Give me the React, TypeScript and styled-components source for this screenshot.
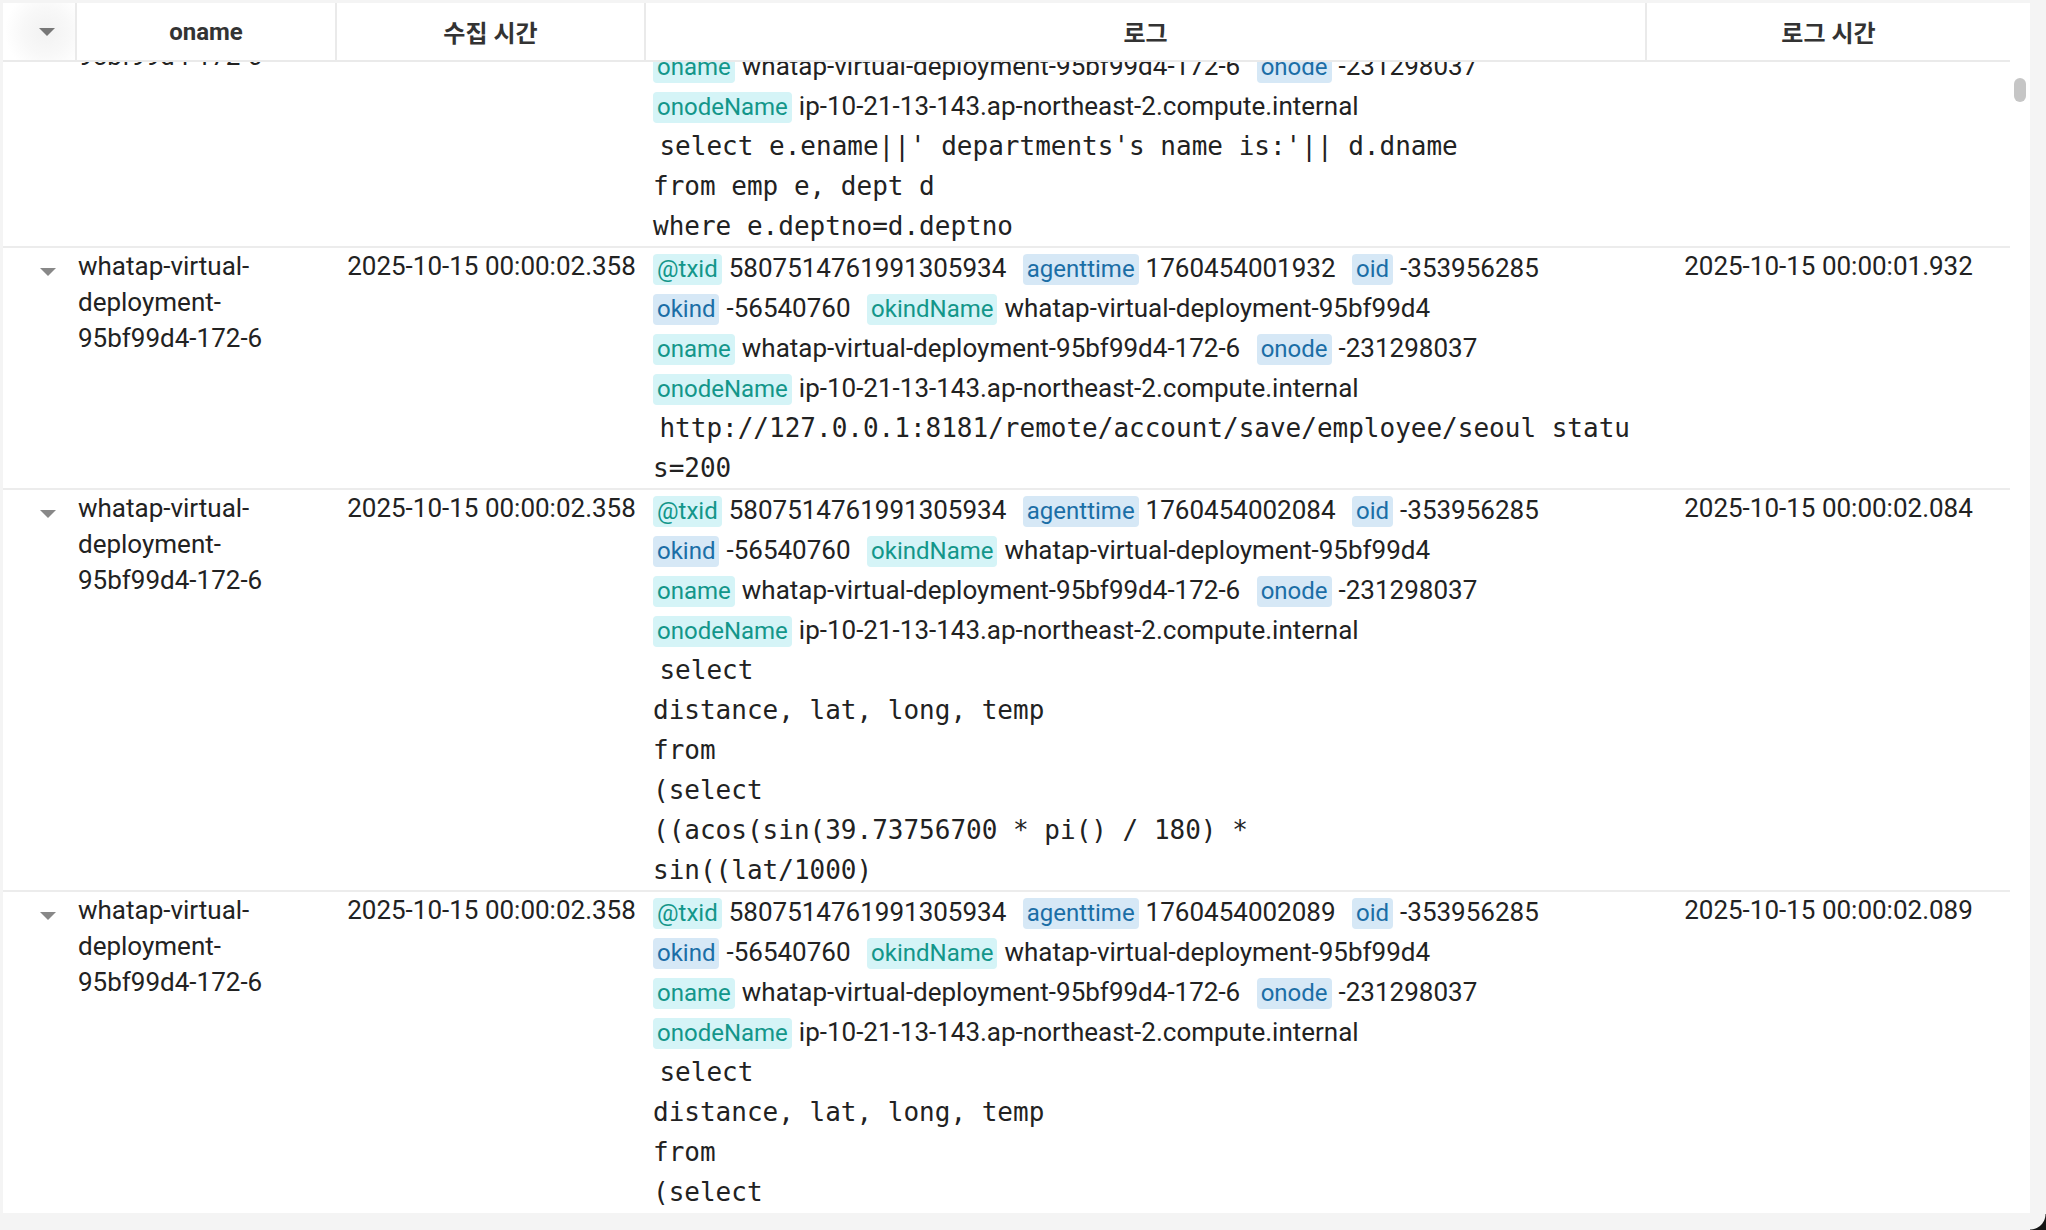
import { useLayoutEffect, useRef } from "react";
import styled, { createGlobalStyle } from "styled-components";

const GlobalStyle = createGlobalStyle`
  html, body {
    margin: 0;
    padding: 0;
    background: #f4f4f4;
  }
  body {
    font-family: Roboto, "Noto Sans CJK KR", sans-serif;
    color: #222;
  }
`;

const COLS = "74px 260px 309px 1001px 363px";

const Frame = styled.div`
  position: relative;
  width: 2046px;
  height: 1230px;
  box-sizing: border-box;
  padding: 3px 16px 17px 3px;
  overflow: hidden;
  background: #f4f4f4;
`;

const Panel = styled.div`
  display: flex;
  height: 100%;
  background: #fff;
`;

const Table = styled.div`
  width: 2007px;
  display: flex;
  flex-direction: column;
  min-height: 0;
`;

const HeaderRow = styled.div`
  display: grid;
  grid-template-columns: ${COLS};
  height: 57px;
  flex-shrink: 0;
  border-bottom: 2px solid #eaeaea;
`;

const HeaderCell = styled.div<{ $last?: boolean }>`
  display: flex;
  align-items: center;
  justify-content: center;
  font-size: 24px;
  font-weight: 700;
  color: #333;
  border-right: ${(p) => (p.$last ? "none" : "2px solid #eaeaea")};
`;

const ToggleHead = styled(HeaderCell)`
  padding-left: 16px;
  background: radial-gradient(circle at 60% 50%, #f2f2f2 0%, #f8f8f8 45%, #fff 80%);
`;

const Caret = styled.span<{ $color?: string }>`
  display: block;
  width: 0;
  height: 0;
  border-left: 8px solid transparent;
  border-right: 8px solid transparent;
  border-top: 8px solid ${(p) => p.$color || "#888"};
`;

const Body = styled.div`
  flex: 1;
  min-height: 0;
  overflow: hidden;
`;

const Row = styled.div`
  display: grid;
  grid-template-columns: ${COLS};
  align-items: start;
  border-bottom: 2px solid #ececec;
`;

const ToggleCell = styled.div`
  padding: 20px 0 0 37px;
`;

const NameCell = styled.div`
  padding-left: 1px;
  font-size: 26px;
  line-height: 36px;
`;

const TimeCell = styled.div`
  font-size: 26px;
  line-height: 36px;
  text-align: center;
  white-space: nowrap;
`;

const LogCell = styled.div`
  padding: 0 7px;
  font-size: 26px;
  line-height: 40px;
  min-width: 0;
`;

const Pair = styled.span`
  white-space: nowrap;
  margin-right: 10px;
`;

const Tag = styled.span<{ $tone: "teal" | "blue" }>`
  display: inline-block;
  padding: 0 4px;
  margin-right: 7px;
  border-radius: 4px;
  font-size: 24px;
  line-height: 31px;
  background: ${(p) => (p.$tone === "teal" ? "#d5f4f7" : "#d6e8f6")};
  color: ${(p) => (p.$tone === "teal" ? "#13968a" : "#1b6ea6")};
`;

const Message = styled.div`
  font-size: 26px;
  line-height: 40px;
  white-space: pre-wrap;
  word-break: break-all;
`;

const Mono = styled.span`
  font-family: "DejaVu Sans Mono", "Liberation Mono", monospace;
`;

const ScrollTrack = styled.div`
  position: relative;
  width: 20px;
  flex-shrink: 0;
  background: #fff;
`;

const Thumb = styled.div`
  position: absolute;
  top: 75px;
  left: 4px;
  width: 12px;
  height: 24px;
  border-radius: 6px;
  background: #c6c6c6;
`;

const Corner = styled.div`
  position: absolute;
  right: 0;
  bottom: 0;
  width: 16px;
  height: 16px;
  background: radial-gradient(circle at 0 0, transparent 15px, #141414 16px);
`;

type Field = { key: string; value: string; tone: "teal" | "blue" };

type LogRow = {
  oname: string;
  collected: string;
  logTime: string;
  fields: Field[];
  message: string;
};

const ONAME = "whatap-virtual-deployment-95bf99d4-172-6";

const fieldsFor = (agenttime: string): Field[] => [
  { key: "@txid", value: "5807514761991305934", tone: "teal" },
  { key: "agenttime", value: agenttime, tone: "blue" },
  { key: "oid", value: "-353956285", tone: "blue" },
  { key: "okind", value: "-56540760", tone: "blue" },
  { key: "okindName", value: "whatap-virtual-deployment-95bf99d4", tone: "teal" },
  { key: "oname", value: ONAME, tone: "teal" },
  { key: "onode", value: "-231298037", tone: "blue" },
  { key: "onodeName", value: "ip-10-21-13-143.ap-northeast-2.compute.internal", tone: "teal" },
];

const SQL_DISTANCE =
  "select\ndistance, lat, long, temp\nfrom\n(select\n((acos(sin(39.73756700 * pi() / 180) *\nsin((lat/1000)";

const rows: LogRow[] = [
  {
    oname: ONAME,
    collected: "2025-10-15 00:00:02.358",
    logTime: "2025-10-15 00:00:01.827",
    fields: fieldsFor("1760454001827"),
    message: "select e.ename||' departments's name is:'|| d.dname\nfrom emp e, dept d\nwhere e.deptno=d.deptno",
  },
  {
    oname: ONAME,
    collected: "2025-10-15 00:00:02.358",
    logTime: "2025-10-15 00:00:01.932",
    fields: fieldsFor("1760454001932"),
    message: "http://127.0.0.1:8181/remote/account/save/employee/seoul status=200",
  },
  {
    oname: ONAME,
    collected: "2025-10-15 00:00:02.358",
    logTime: "2025-10-15 00:00:02.084",
    fields: fieldsFor("1760454002084"),
    message: SQL_DISTANCE,
  },
  {
    oname: ONAME,
    collected: "2025-10-15 00:00:02.358",
    logTime: "2025-10-15 00:00:02.089",
    fields: fieldsFor("1760454002089"),
    message: SQL_DISTANCE,
  },
];

const App = () => {
  const bodyRef = useRef<HTMLDivElement>(null);

  useLayoutEffect(() => {
    if (bodyRef.current) bodyRef.current.scrollTop = 96;
  }, []);

  return (
    <>
      <GlobalStyle />
      <Frame>
        <Panel>
          <Table>
            <HeaderRow>
              <ToggleHead>
                <Caret $color="#777" />
              </ToggleHead>
              <HeaderCell>oname</HeaderCell>
              <HeaderCell>수집 시간</HeaderCell>
              <HeaderCell>로그</HeaderCell>
              <HeaderCell $last>로그 시간</HeaderCell>
            </HeaderRow>
            <Body ref={bodyRef}>
              {rows.map((row, i) => (
                <Row key={i}>
                  <ToggleCell>
                    <Caret />
                  </ToggleCell>
                  <NameCell>{row.oname}</NameCell>
                  <TimeCell>{row.collected}</TimeCell>
                  <LogCell>
                    <div>
                      {row.fields.map((f) => (
                        <span key={f.key}>
                          <Pair>
                            <Tag $tone={f.tone}>{f.key}</Tag>
                            {f.value}
                          </Pair>{" "}
                        </span>
                      ))}
                    </div>
                    <Message>
                      {" "}
                      <Mono>{row.message}</Mono>
                    </Message>
                  </LogCell>
                  <TimeCell>{row.logTime}</TimeCell>
                </Row>
              ))}
            </Body>
          </Table>
          <ScrollTrack>
            <Thumb />
          </ScrollTrack>
        </Panel>
        <Corner />
      </Frame>
    </>
  );
};

export default App;
